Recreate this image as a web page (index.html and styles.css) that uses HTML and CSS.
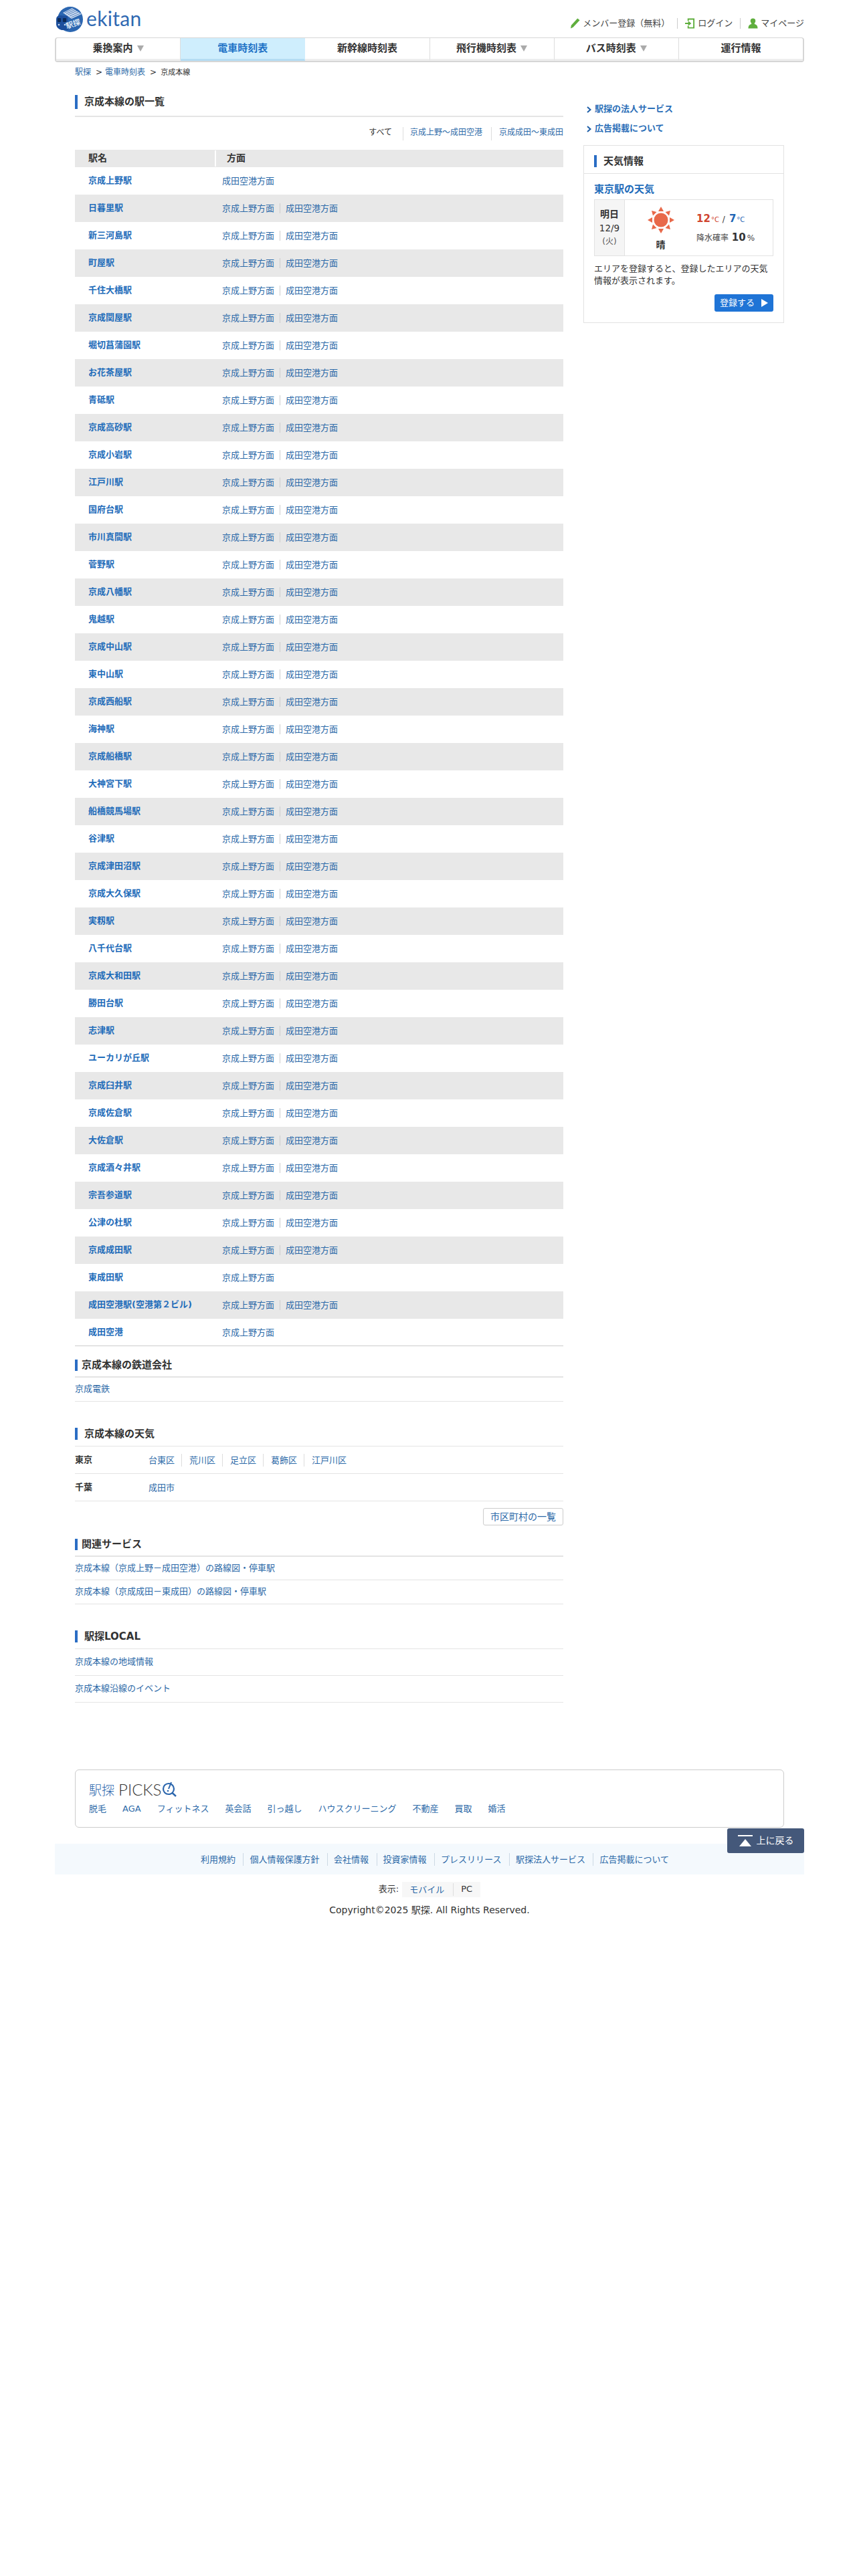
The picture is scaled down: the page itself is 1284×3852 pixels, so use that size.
FILE: index.html
```html
<!DOCTYPE html>
<html lang="ja">
<head>
<meta charset="utf-8">
<title>京成本線の駅一覧 | 駅探</title>
<link rel="stylesheet" href="styles.css">
</head>
<body>
<div class="page">
  <header class="top">
    <a class="logo" href="#">
      <svg class="logo-mark" width="40" height="39" viewBox="0 0 40 39">
        <circle cx="21" cy="20" r="19" fill="#2b66b1"/>
        <path d="M10 10 L24 3 L38 12 L23 19 Z" fill="#cfdcef"/>
        <path d="M12.500 10 L26 4 M15 11.500 L28.500 5.500 M17.500 13 L31 7 M20 15 L33.500 9 M22.500 17 L36 11" stroke="#2b66b1" stroke-width=".8"/>
        <path d="M0 20 Q0 15 5 14 L17 15 L18 36 L8 36 Q1 34 0 28 Z" fill="#1d4f9c"/>
        <rect x="2" y="18" width="5" height="6" rx="1" fill="#0d2b57"/>
        <rect x="10" y="18" width="5" height="6" rx="1" fill="#0d2b57"/>
        <circle cx="4" cy="28" r="1.300" fill="#cfdcef"/>
        <circle cx="13" cy="28" r="1.300" fill="#cfdcef"/>
        <text x="16" y="34" class="logo-kanji" transform="rotate(-18 16 34)">駅探</text>
      </svg>
      <span class="logo-word">ekitan</span>
    </a>
    <nav class="member">
      <a class="member-link" href="#">
        <svg width="15" height="18" viewBox="0 0 16 18"><path d="M12 1 L15.500 4 L5 15 L1 17 L2 12 Z" fill="#5fae3d"/></svg>
        メンバー登録（無料）
      </a>
      <a class="member-link member-sep" href="#">
        <svg width="15" height="18" viewBox="0 0 16 18"><path d="M4 1 H15 V17 H4 V13 H6 V15 H13 V3 H6 V5 H4 Z" fill="#5fae3d"/><path d="M0 8 H5 V5 L10 9 L5 13 V10 H0 Z" fill="#5fae3d"/></svg>
        ログイン
      </a>
      <a class="member-link member-sep" href="#">
        <svg width="15" height="18" viewBox="0 0 16 18"><circle cx="8" cy="5" r="4" fill="#5fae3d"/><path d="M5.500 8 H10.500 V10 Q15.500 11 15.500 17 H.5 Q.5 11 5.500 10 Z" fill="#5fae3d"/></svg>
        マイページ
      </a>
    </nav>
  </header>

  <nav class="tabs">
    <a class="tab" href="#">乗換案内<i class="caret"></i></a>
    <a class="tab tab-on" href="#">電車時刻表</a>
    <a class="tab" href="#">新幹線時刻表</a>
    <a class="tab" href="#">飛行機時刻表<i class="caret"></i></a>
    <a class="tab" href="#">バス時刻表<i class="caret"></i></a>
    <a class="tab" href="#">運行情報</a>
  </nav>

  <div class="inner">
    <div class="crumbs"><a href="#">駅探</a><span class="gt">&gt;</span><a href="#">電車時刻表</a><span class="gt">&gt;</span><span class="here">京成本線</span></div>

    <div class="cols">
      <main class="main">
        <h1 class="title"><span>京成本線の駅一覧</span></h1>
        <div class="filter">
          <span class="f-item f-all">すべて</span>
          <a class="f-item f-a" href="#">京成上野～成田空港</a>
          <a class="f-item f-b" href="#">京成成田～東成田</a>
        </div>

        <div class="list-head"><span class="lh-name">駅名</span><span class="lh-dir">方面</span></div>
        <ul class="stations">
          <li><a class="st" href="#">京成上野駅</a><a class="dir" href="#">成田空港方面</a></li>
          <li><a class="st" href="#">日暮里駅</a><a class="dir" href="#">京成上野方面</a><a class="dir" href="#">成田空港方面</a></li>
          <li><a class="st" href="#">新三河島駅</a><a class="dir" href="#">京成上野方面</a><a class="dir" href="#">成田空港方面</a></li>
          <li><a class="st" href="#">町屋駅</a><a class="dir" href="#">京成上野方面</a><a class="dir" href="#">成田空港方面</a></li>
          <li><a class="st" href="#">千住大橋駅</a><a class="dir" href="#">京成上野方面</a><a class="dir" href="#">成田空港方面</a></li>
          <li><a class="st" href="#">京成関屋駅</a><a class="dir" href="#">京成上野方面</a><a class="dir" href="#">成田空港方面</a></li>
          <li><a class="st" href="#">堀切菖蒲園駅</a><a class="dir" href="#">京成上野方面</a><a class="dir" href="#">成田空港方面</a></li>
          <li><a class="st" href="#">お花茶屋駅</a><a class="dir" href="#">京成上野方面</a><a class="dir" href="#">成田空港方面</a></li>
          <li><a class="st" href="#">青砥駅</a><a class="dir" href="#">京成上野方面</a><a class="dir" href="#">成田空港方面</a></li>
          <li><a class="st" href="#">京成高砂駅</a><a class="dir" href="#">京成上野方面</a><a class="dir" href="#">成田空港方面</a></li>
          <li><a class="st" href="#">京成小岩駅</a><a class="dir" href="#">京成上野方面</a><a class="dir" href="#">成田空港方面</a></li>
          <li><a class="st" href="#">江戸川駅</a><a class="dir" href="#">京成上野方面</a><a class="dir" href="#">成田空港方面</a></li>
          <li><a class="st" href="#">国府台駅</a><a class="dir" href="#">京成上野方面</a><a class="dir" href="#">成田空港方面</a></li>
          <li><a class="st" href="#">市川真間駅</a><a class="dir" href="#">京成上野方面</a><a class="dir" href="#">成田空港方面</a></li>
          <li><a class="st" href="#">菅野駅</a><a class="dir" href="#">京成上野方面</a><a class="dir" href="#">成田空港方面</a></li>
          <li><a class="st" href="#">京成八幡駅</a><a class="dir" href="#">京成上野方面</a><a class="dir" href="#">成田空港方面</a></li>
          <li><a class="st" href="#">鬼越駅</a><a class="dir" href="#">京成上野方面</a><a class="dir" href="#">成田空港方面</a></li>
          <li><a class="st" href="#">京成中山駅</a><a class="dir" href="#">京成上野方面</a><a class="dir" href="#">成田空港方面</a></li>
          <li><a class="st" href="#">東中山駅</a><a class="dir" href="#">京成上野方面</a><a class="dir" href="#">成田空港方面</a></li>
          <li><a class="st" href="#">京成西船駅</a><a class="dir" href="#">京成上野方面</a><a class="dir" href="#">成田空港方面</a></li>
          <li><a class="st" href="#">海神駅</a><a class="dir" href="#">京成上野方面</a><a class="dir" href="#">成田空港方面</a></li>
          <li><a class="st" href="#">京成船橋駅</a><a class="dir" href="#">京成上野方面</a><a class="dir" href="#">成田空港方面</a></li>
          <li><a class="st" href="#">大神宮下駅</a><a class="dir" href="#">京成上野方面</a><a class="dir" href="#">成田空港方面</a></li>
          <li><a class="st" href="#">船橋競馬場駅</a><a class="dir" href="#">京成上野方面</a><a class="dir" href="#">成田空港方面</a></li>
          <li><a class="st" href="#">谷津駅</a><a class="dir" href="#">京成上野方面</a><a class="dir" href="#">成田空港方面</a></li>
          <li><a class="st" href="#">京成津田沼駅</a><a class="dir" href="#">京成上野方面</a><a class="dir" href="#">成田空港方面</a></li>
          <li><a class="st" href="#">京成大久保駅</a><a class="dir" href="#">京成上野方面</a><a class="dir" href="#">成田空港方面</a></li>
          <li><a class="st" href="#">実籾駅</a><a class="dir" href="#">京成上野方面</a><a class="dir" href="#">成田空港方面</a></li>
          <li><a class="st" href="#">八千代台駅</a><a class="dir" href="#">京成上野方面</a><a class="dir" href="#">成田空港方面</a></li>
          <li><a class="st" href="#">京成大和田駅</a><a class="dir" href="#">京成上野方面</a><a class="dir" href="#">成田空港方面</a></li>
          <li><a class="st" href="#">勝田台駅</a><a class="dir" href="#">京成上野方面</a><a class="dir" href="#">成田空港方面</a></li>
          <li><a class="st" href="#">志津駅</a><a class="dir" href="#">京成上野方面</a><a class="dir" href="#">成田空港方面</a></li>
          <li><a class="st" href="#">ユーカリが丘駅</a><a class="dir" href="#">京成上野方面</a><a class="dir" href="#">成田空港方面</a></li>
          <li><a class="st" href="#">京成臼井駅</a><a class="dir" href="#">京成上野方面</a><a class="dir" href="#">成田空港方面</a></li>
          <li><a class="st" href="#">京成佐倉駅</a><a class="dir" href="#">京成上野方面</a><a class="dir" href="#">成田空港方面</a></li>
          <li><a class="st" href="#">大佐倉駅</a><a class="dir" href="#">京成上野方面</a><a class="dir" href="#">成田空港方面</a></li>
          <li><a class="st" href="#">京成酒々井駅</a><a class="dir" href="#">京成上野方面</a><a class="dir" href="#">成田空港方面</a></li>
          <li><a class="st" href="#">宗吾参道駅</a><a class="dir" href="#">京成上野方面</a><a class="dir" href="#">成田空港方面</a></li>
          <li><a class="st" href="#">公津の杜駅</a><a class="dir" href="#">京成上野方面</a><a class="dir" href="#">成田空港方面</a></li>
          <li><a class="st" href="#">京成成田駅</a><a class="dir" href="#">京成上野方面</a><a class="dir" href="#">成田空港方面</a></li>
          <li><a class="st" href="#">東成田駅</a><a class="dir" href="#">京成上野方面</a></li>
          <li><a class="st" href="#">成田空港駅(空港第２ビル)</a><a class="dir" href="#">京成上野方面</a><a class="dir" href="#">成田空港方面</a></li>
          <li><a class="st" href="#">成田空港</a><a class="dir" href="#">京成上野方面</a></li>
        </ul>

        <section class="sec sec-company">
          <h2 class="sub"><span>京成本線の鉄道会社</span></h2>
          <a class="line-item li-35" href="#">京成電鉄</a>
        </section>

        <section class="sec sec-weather">
          <h2 class="sub2"><span>京成本線の天気</span></h2>
          <div class="pref"><b class="pref-name">東京</b><a class="city" href="#">台東区</a><a class="city" href="#">荒川区</a><a class="city" href="#">足立区</a><a class="city" href="#">葛飾区</a><a class="city" href="#">江戸川区</a></div>
          <div class="pref"><b class="pref-name">千葉</b><a class="city" href="#">成田市</a></div>
          <div class="more"><a class="more-btn" href="#">市区町村の一覧</a></div>
        </section>

        <section class="sec sec-related">
          <h2 class="sub"><span>関連サービス</span></h2>
          <a class="line-item li-34" href="#">京成本線（京成上野－成田空港）の路線図・停車駅</a>
          <a class="line-item li-35" href="#">京成本線（京成成田－東成田）の路線図・停車駅</a>
        </section>

        <section class="sec sec-local">
          <h2 class="sub2"><span>駅探LOCAL</span></h2>
          <a class="line-item li-39" href="#">京成本線の地域情報</a>
          <a class="line-item li-39" href="#">京成本線沿線のイベント</a>
        </section>
      </main>

      <aside class="side">
        <a class="side-link" href="#"><svg width="7" height="10" viewBox="0 0 7 10"><path d="M1 1 L5.500 5 L1 9" fill="none" stroke="#1f5fa8" stroke-width="2"/></svg>駅探の法人サービス</a>
        <a class="side-link" href="#"><svg width="7" height="10" viewBox="0 0 7 10"><path d="M1 1 L5.500 5 L1 9" fill="none" stroke="#1f5fa8" stroke-width="2"/></svg>広告掲載について</a>
        <div class="wx">
          <h2 class="wx-head"><span>天気情報</span></h2>
          <div class="wx-body">
            <a class="wx-place" href="#">東京駅の天気</a>
            <div class="wx-card">
              <div class="wx-date"><b>明日</b><span class="wx-d">12/9</span><span class="wx-w">(火)</span></div>
              <div class="wx-icon">
                <svg width="40" height="40" viewBox="0 0 40 40">
                  <circle cx="20" cy="20" r="10.500" fill="#e8694a"/>
                  <g fill="#e8694a">
                    <path d="M20 0 L24 7 H16 Z"/><path d="M20 40 L24 33 H16 Z"/><path d="M0 20 L7 16 V24 Z"/><path d="M40 20 L33 16 V24 Z"/>
                    <path d="M6 6 L13.500 8 L8 13.500 Z"/><path d="M34 6 L32 13.500 L26.500 8 Z"/><path d="M6 34 L8 26.500 L13.500 32 Z"/><path d="M34 34 L26.500 32 L32 26.500 Z"/>
                  </g>
                </svg>
                <b class="wx-sky">晴</b>
              </div>
              <div class="wx-data">
                <div class="wx-temp"><b class="hot">12</b><small class="hot-u">°C</small><span class="slash">/</span><b class="cold">7</b><small class="cold-u">°C</small></div>
                <div class="wx-rain">降水確率 <b>10</b><small>%</small></div>
              </div>
            </div>
            <p class="wx-note">エリアを登録すると、登録したエリアの天気情報が表示されます。</p>
            <div class="wx-foot"><a class="wx-btn" href="#">登録する<svg width="10" height="12" viewBox="0 0 10 12"><path d="M0 0 L10 6 L0 12 Z" fill="#fff"/></svg></a></div>
          </div>
        </div>
      </aside>
    </div>

    <section class="picks">
      <div class="picks-logo">
        <span class="pl-ja">駅探</span><span class="pl-en">PICKS</span>
        <svg width="23" height="23" viewBox="0 0 23 23"><circle cx="10" cy="11" r="8" fill="none" stroke="#2b66ad" stroke-width="2.200"/><path d="M15.500 17 L21 22" stroke="#2b66ad" stroke-width="2.400"/><path d="M14 1 L10 11" stroke="#2b66ad" stroke-width="2"/><circle cx="9" cy="14" r="1.300" fill="#2b66ad"/></svg>
      </div>
      <div class="picks-links">
        <a href="#">脱毛</a><a href="#">AGA</a><a href="#">フィットネス</a><a href="#">英会話</a><a href="#">引っ越し</a><a href="#">ハウスクリーニング</a><a href="#">不動産</a><a href="#">買取</a><a href="#">婚活</a>
      </div>
    </section>
  </div>

  <footer class="foot">
    <a class="totop" href="#">
      <svg width="22" height="17" viewBox="0 0 22 17"><rect width="22" height="2" fill="#fff"/><path d="M11 6 L20 17 H2 Z" fill="#fff"/></svg>
      上に戻る
    </a>
    <div class="foot-links">
      <a href="#">利用規約</a><a href="#">個人情報保護方針</a><a href="#">会社情報</a><a href="#">投資家情報</a><a href="#">プレスリリース</a><a href="#">駅探法人サービス</a><a href="#">広告掲載について</a>
    </div>
    <div class="view"><span class="view-label">表示:</span><span class="view-box"><a class="view-m" href="#">モバイル</a><span class="view-pc">PC</span></span></div>
    <p class="copy">Copyright©2025 駅探. All Rights Reserved.</p>
  </footer>
</div>
</body>
</html>
```
FILE: styles.css
```css
* { box-sizing: border-box; }
html, body { margin: 0; padding: 0; background: #fff; }
body {
  font-family: "DejaVu Sans", "Noto Sans CJK JP", sans-serif;
  font-size: 13px;
  color: #333;
  line-height: 1.4;
}
a { color: #2d6aa8; text-decoration: none; }
h1, h2, p, ul { margin: 0; padding: 0; }
ul { list-style: none; }

.page { width: 1120px; margin: 0 auto; }

/* header */
.top { height: 56px; display: flex; justify-content: space-between; }
.logo { display: flex; align-items: flex-start; padding: 9px 0 0 2px; gap: 5px; }
.logo-mark { display: block; }
.logo-kanji { font: bold 11px "Noto Sans CJK JP", sans-serif; fill: #dfe8f5; }
.logo-word { font: 400 30px/36px "Lato", sans-serif; color: #2f69b2; letter-spacing: .3px; }
.member { display: flex; align-items: center; height: 70px; }
.member-link { display: flex; align-items: center; gap: 4px; font-size: 13px; color: #444; height: 16px; }
.member-sep { border-left: 1px solid #ccc; margin-left: 11px; padding-left: 11px; }

/* main tabs */
.tabs { display: flex; height: 37px; border: 2px solid #d6d6d6; border-radius: 4px; border-top-width: 1.500px; }
.tab {
  flex: 1;
  display: flex; align-items: center; justify-content: center; gap: 6px;
  font-size: 15px; font-weight: bold; color: #333;
  border-right: 1px solid #ddd;
  border-bottom: 3px solid #eee;
}
.tab:last-child { border-right: 0; }
.tab-on { background: #cfeefd; color: #1e72c6; border-right-color: #cfeefd; border-bottom-color: #b4dcf3; }
.caret { width: 0; height: 0; border-left: 5px solid transparent; border-right: 5px solid transparent; border-top: 9px solid #aaa; }

.inner { padding: 0 30px; }

.crumbs { height: 49px; padding-top: 7px; font-size: 12px; line-height: 17px; }
.gt { margin: 0 4px 0 7px; color: #333; }
.here { font-size: 11px; color: #333; margin-left: 2px; }

.cols { display: flex; gap: 30px; align-items: flex-start; }
.main { width: 730px; }
.side { width: 300px; padding-top: 7px; }

/* headings */
.title { font-size: 15px; line-height: 21px; padding-bottom: 10px; border-bottom: 2px solid #e4e4e4; }
.title span { display: block; border-left: 4px solid #2a6dc4; padding-left: 10px; }
.sub { font-size: 15px; line-height: 17px; padding-bottom: 8px; border-bottom: 2px solid #e4e4e4; }
.sub span { display: block; border-left: 4px solid #2a6dc4; padding-left: 6px; }
.sub2 { font-size: 15px; line-height: 18px; padding-bottom: 9px; border-bottom: 1px solid #e4e4e4; }
.sub2 span { display: block; border-left: 4px solid #2a6dc4; padding-left: 10px; }

/* filter */
.filter { height: 49px; padding-top: 15px; display: flex; justify-content: flex-end; font-size: 12px; }
.f-item { height: 20px; line-height: 17px; }
.f-all { padding-right: 16px; }
.f-a { border-left: 1px solid #ddd; padding: 0 13px 0 10px; }
.f-b { border-left: 1px solid #ddd; padding-left: 11px; }

/* station list */
.list-head { display: flex; height: 26px; background: #e8e8e8; font-size: 14px; font-weight: bold; align-items: stretch; padding: 1px 0; }
.lh-name { width: 209px; padding-left: 20px; line-height: 23px; }
.lh-dir { border-left: 2px solid #fff; padding-left: 16px; line-height: 23px; }
.stations { border-bottom: 1px solid #ccc; }
.stations li { display: flex; align-items: center; height: 41px; }
.stations li:nth-child(even) { background: #e8e8e8; }
.stations li:last-child { height: 40px; }
.st { width: 220px; padding-left: 20px; font-weight: bold; color: #1f6cba; }
.dir { line-height: 15px; }
.dir + .dir { border-left: 1px solid #ccc; margin-left: 8px; padding-left: 8px; }

/* lists below */
.sec-company { margin-top: 20px; }
.sec-weather { margin-top: 39px; }
.sec-related { margin-top: 20px; }
.sec-local { margin-top: 39px; }
.line-item { display: flex; align-items: center; border-bottom: 1px solid #e4e4e4; }
.li-34 { height: 35px; }
.li-35 { height: 36px; }
.li-39 { height: 40px; }
.pref { display: flex; align-items: center; height: 41px; border-bottom: 1px solid #e4e4e4; }
.pref-name { width: 110px; }
.city { line-height: 19px; padding-right: 10px; }
.city + .city { border-left: 1px solid #ddd; padding-left: 11px; }
.more { display: flex; justify-content: flex-end; margin-top: 10px; }
.more-btn { display: block; width: 120px; height: 26px; line-height: 24px; text-align: center; font-size: 14px; border: 1px solid #ccc; border-radius: 3px; }

/* sidebar */
.side-link { display: flex; align-items: center; height: 29px; gap: 5px; padding-left: 5px; font-size: 13px; font-weight: bold; color: #2c6fb8; }
.wx { margin-top: 10px; border: 1px solid #e2e2e2; height: 266px; }
.wx-head { height: 42px; padding: 14px 15px 0; border-bottom: 1px solid #e2e2e2; font-size: 15px; line-height: 18px; }
.wx-head span { display: block; border-left: 4px solid #2a6dc4; padding-left: 10px; }
.wx-body { padding: 0 15px; }
.wx-place { display: block; height: 38px; font-size: 15px; line-height: 46px; font-weight: bold; color: #1f6cba; }
.wx-card { display: flex; height: 85px; border: 1px solid #e2e2e2; }
.wx-date { width: 45px; background: #f5f5f5; border-right: 1px solid #e2e2e2; display: flex; flex-direction: column; align-items: center; padding-top: 11px; }
.wx-date b { font-size: 14px; line-height: 20px; }
.wx-d { font-size: 13.500px; line-height: 22px; }
.wx-w { font-size: 12px; line-height: 18px; color: #555; }
.wx-icon { width: 107px; display: flex; flex-direction: column; align-items: center; padding-top: 10px; }
.wx-icon svg { display: block; }
.wx-sky { font-size: 14px; line-height: 20px; margin-top: 7px; }
.wx-data { padding-top: 14px; }
.wx-temp { height: 28px; line-height: 28px; }
.hot { font-size: 15px; color: #d0452f; }
.hot-u { font-size: 10px; color: #d0452f; margin-left: 1px; }
.cold { font-size: 15px; color: #1f66b5; }
.cold-u { font-size: 10px; color: #1f66b5; margin-left: 1px; }
.slash { font-size: 12px; margin: 0 6px 0 5px; }
.wx-rain { font-size: 12px; line-height: 28px; color: #444; }
.wx-rain b { font-size: 15px; color: #333; margin-left: 1px; }
.wx-rain small { font-size: 12px; margin-left: 2px; }
.wx-note { margin-top: 10px; font-size: 13px; line-height: 18px; color: #333; }
.wx-foot { display: flex; justify-content: flex-end; margin-top: 11px; }
.wx-btn { display: flex; align-items: center; justify-content: center; gap: 10px; width: 88px; height: 26px; background: #1f74d6; border-radius: 3px; color: #fff; font-size: 13px; }

/* picks */
.picks { margin-top: 100px; height: 87px; border: 1px solid #ccc; border-radius: 6px; padding: 17px 20px 0; }
.picks-logo { display: flex; align-items: center; height: 23px; }
.pl-ja { font: 300 19px/23px "Noto Sans CJK JP", sans-serif; color: #2b66ad; margin-right: 6px; }
.pl-en { font: 300 24px/23px "Lato", sans-serif; color: #333; margin-right: 1px; }
.picks-links { display: flex; gap: 24px; margin-top: 9px; line-height: 18px; }

/* footer */
.foot { position: relative; margin-top: 24px; text-align: center; }
.totop { position: absolute; top: -23px; right: 0; display: flex; align-items: center; justify-content: center; gap: 6px; width: 115px; height: 37px; background: #44587a; border-radius: 3px; color: #fff; font-size: 14px; }
.foot-links { display: flex; justify-content: center; align-items: center; height: 46px; padding-left: 16px; background: #f4f9fd; }
.foot-links a { line-height: 19px; padding-right: 11.500px; }
.foot-links a + a { border-left: 1px solid #ccd9e4; padding-left: 9px; }
.foot-links a:last-child { padding-right: 0; }
.view { display: flex; justify-content: center; align-items: center; margin-top: 11px; height: 23px; }
.view-label { margin-right: 5px; }
.view-box { display: flex; align-items: center; height: 23px; background: #f7f7f7; padding: 0 12px 0 11px; }
.view-m { padding-right: 13px; border-right: 1px solid #ddd; line-height: 19px; }
.view-pc { padding-left: 11px; }
.copy { margin-top: 10px; line-height: 18px; font-size: 14px; }
```
